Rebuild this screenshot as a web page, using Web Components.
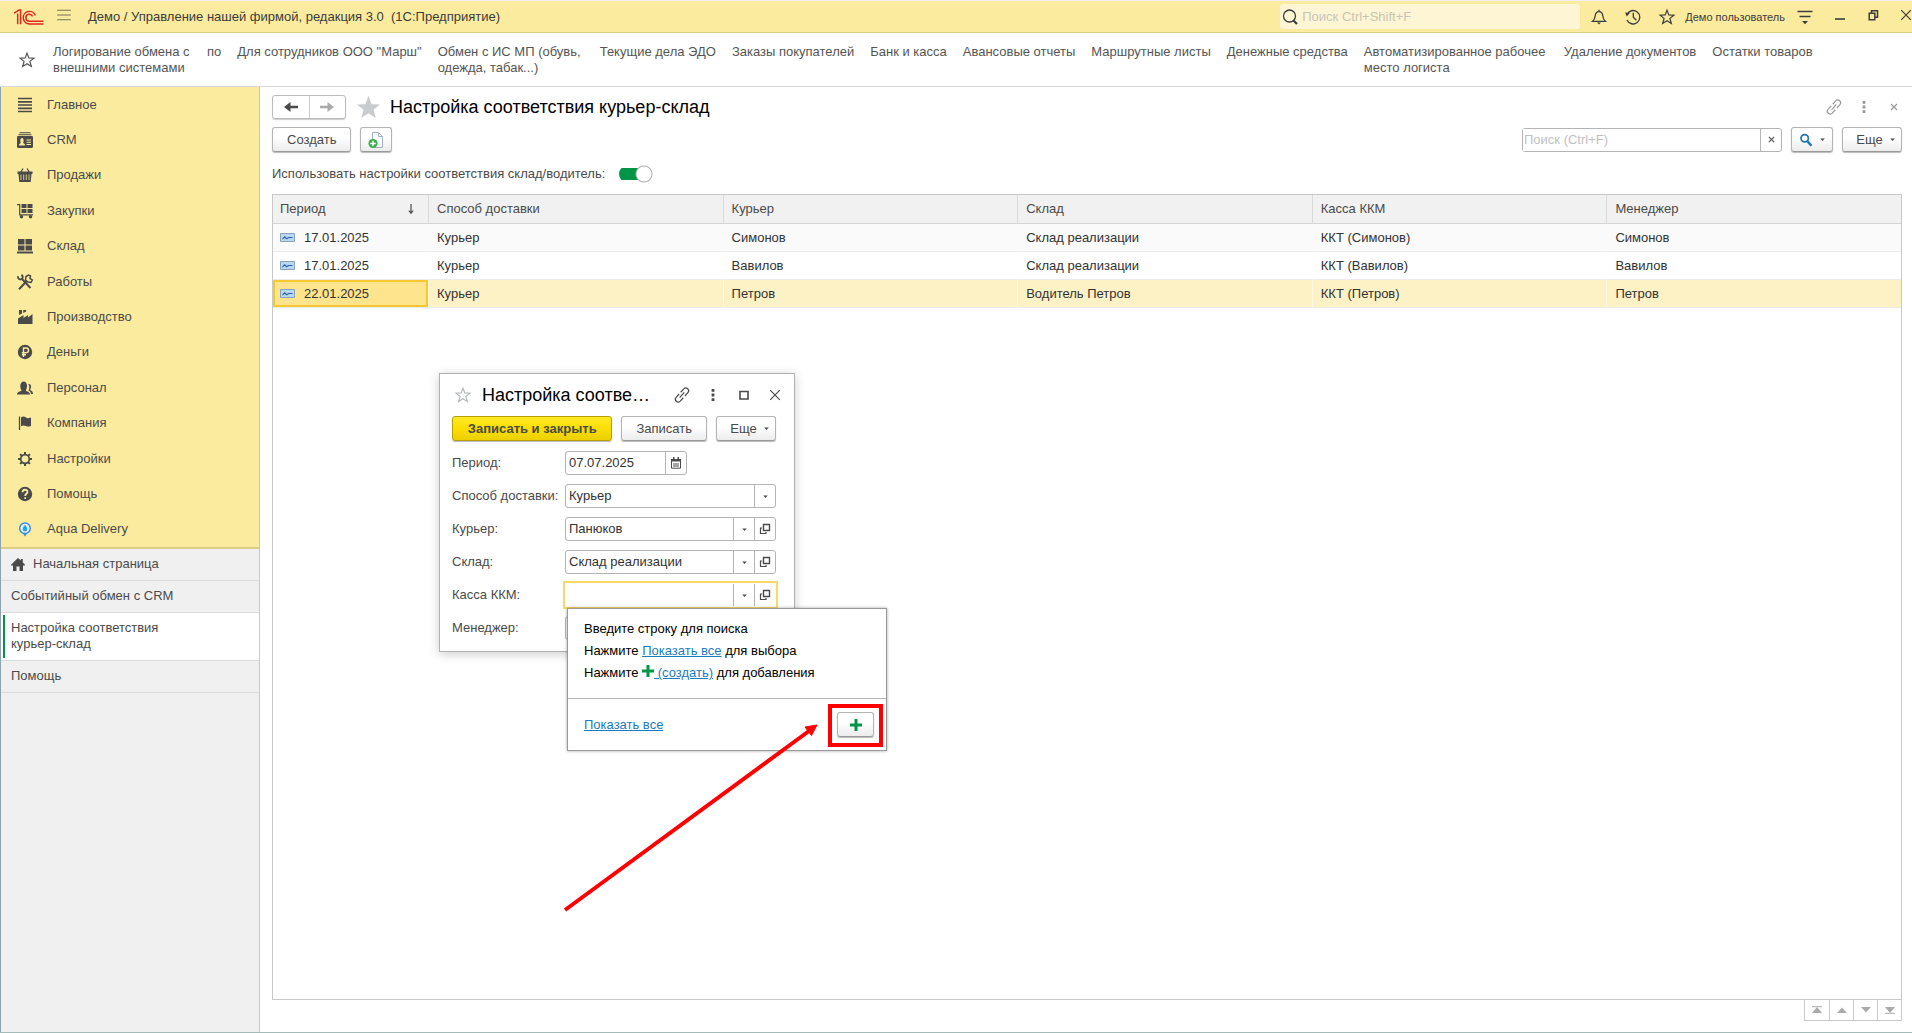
<!DOCTYPE html>
<html lang="ru">
<head>
<meta charset="utf-8">
<title>Управление нашей фирмой</title>
<style>
	:root {
		--brand: #fbeb9e;
		--brand-line: #d8cd84;
		--line: #c8c8c8;
		--text: #4a4a4a;
		--link: #1a7cc0;
		--green: #009646;
	}

	html,
	body {
		height: 100%;
		margin: 0;
	}

	body {
		color: var(--text);
		font-family: "Liberation Sans", Arial, sans-serif;
		font-size: 13px;
		line-height: 16px;
		overflow: hidden;
	}
</style>
</head>
<body>
<app-shell>
	<title-bar slot="title"></title-bar>
	<favorites-bar slot="favorites">
		<a href="#">Логирование обмена с внешними системами</a>
		<a href="#">по</a>
		<a href="#">Для сотрудников ООО "Марш"</a>
		<a href="#">Обмен с ИС МП (обувь, одежда, табак...)</a>
		<a href="#">Текущие дела ЭДО</a>
		<a href="#">Заказы покупателей</a>
		<a href="#">Банк и касса</a>
		<a href="#">Авансовые отчеты</a>
		<a href="#">Маршрутные листы</a>
		<a href="#">Денежные средства</a>
		<a href="#">Автоматизированное рабочее место логиста</a>
		<a href="#">Удаление документов</a>
		<a href="#">Остатки товаров</a>
	</favorites-bar>
	<section-menu slot="side"></section-menu>
	<open-tabs slot="side"></open-tabs>
	<list-form></list-form>
	<form-window slot="windows"></form-window>
	<call-out slot="windows"></call-out>
</app-shell>

<script>
// Icon shapes: [viewBox, markup]
const ICONS = {
	logo: ['0 0 30 16', '<g fill="none" stroke="#e0281f" stroke-width="1.5"><path d="M.8 4.5V3.6L5 1h1.6v14.2M3.7 15.2V4.6"/><path d="M21.4 6.4A6.3 6.3 0 1 0 15.5 15H29.5"/><path d="M18.6 7.4a3.5 3.5 0 1 0-3.2 4.8H29.5"/></g>'],
	burger: ['0 0 16 14', '<path d="M0 1.5h16M0 7h16M0 12.5h16" stroke="currentColor" stroke-width="1.3"/>'],
	search: ['0 0 16 16', '<circle cx="7.5" cy="7" r="6" fill="none" stroke="currentColor" stroke-width="1.3"/><path d="M11.5 11.5l3.5 3.5" stroke="currentColor" stroke-width="2.2"/>'],
	lens: ['0 0 16 16', '<circle cx="6.5" cy="6" r="4.2" fill="#fff" stroke="#1f77b4" stroke-width="2"/><path d="M9.8 9.6l4.4 5" stroke="#1f77b4" stroke-width="2.8"/>'],
	bell: ['0 0 16 16', '<path d="M1.5 12.4h13c-2-1.6-2.4-3-2.7-5.4C11.5 4 10.3 2.7 8 2.7S4.5 4 4.2 7c-.3 2.4-.7 3.8-2.7 5.4zM8 .8v2" fill="none" stroke="currentColor" stroke-width="1.3"/><path d="M6 13.5h4L8 15.6z" fill="currentColor"/>'],
	history: ['0 0 16 16', '<path d="M2 5.5A6.7 6.7 0 1 1 2 11M8.3 3.8V8.3l3 3" fill="none" stroke="currentColor" stroke-width="1.3"/><path d="M0 3.5l4.8.6L1.8 7.6z" fill="currentColor"/>'],
	star: ['0 0 16 16', '<path d="M8 1.1l1.8 4.8 5.1.3-4 3.2 1.4 5.1L8 11.7l-4.3 2.8 1.4-5.1-4-3.2 5.1-.3z" fill="none" stroke="currentColor" stroke-width="1.2"/>'],
	starFull: ['0 0 24 23', '<path d="M12 0l3.3 8.5 8.7.3-6.8 5.5L19.6 23 12 18l-7.6 5 2.4-8.7L0 8.8l8.7-.3z" fill="#c9cbce"/>'],
	userMenu: ['0 0 16 16', '<path d="M.5 2.5h15M2.5 7.5h11" stroke="currentColor" stroke-width="1.3"/><path d="M5 12h6l-3 3.2z" fill="currentColor"/>'],
	minimize: ['0 0 12 12', '<path d="M1 10h10" stroke="currentColor" stroke-width="1.6"/>'],
	restore: ['0 0 12 12', '<path d="M2.2 4.2h5.6v6.6H2.2zM4.5 4V1.7h6v6.6H8" fill="none" stroke="currentColor" stroke-width="1.5"/>'],
	maximize: ['0 0 12 12', '<path d="M2 2.5h8v7.5H2z" fill="none" stroke="currentColor" stroke-width="1.6"/>'],
	close: ['0 0 12 12', '<path d="M1.2 1.2l9.6 9.6M10.8 1.2L1.2 10.8" stroke="currentColor" stroke-width="1.2"/>'],
	cross: ['0 0 8 8', '<path d="M1 1l6 6M7 1L1 7" stroke="currentColor" stroke-width="1.2"/>'],
	link: ['0 0 16 16', '<g transform="rotate(-48 8 8)" fill="none" stroke="currentColor" stroke-width="1.2"><path d="M6.8 5.2H2.3a2.8 2.8 0 0 0 0 5.6h4.5M9.2 5.2h4.5a2.8 2.8 0 0 1 0 5.6H9.2M4.5 8h7"/></g>'],
	dots: ['0 0 4 12', '<path d="M.6 0h2.8v2.8H.6zM.6 4.6h2.8v2.8H.6zM.6 9.2h2.8V12H.6z" fill="currentColor"/>'],
	back: ['0 0 14 10', '<path d="M6.5 0v3.8H14v2.4H6.5V10L0 5z" fill="currentColor"/>'],
	forward: ['0 0 14 10', '<path d="M7.5 0v3.8H0v2.4h7.5V10L14 5z" fill="currentColor"/>'],
	copy: ['0 0 16 18', '<path d="M4.5 1.5h6l4 4v11h-10z" fill="#fafcff" stroke="#9fb0c4"/><path d="M10.5 1.5v4h4" fill="none" stroke="#9fb0c4"/><circle cx="5" cy="12.5" r="4.5" fill="#36ab49"/><path d="M5 9.7v5.6M2.2 12.5h5.6" stroke="#fff" stroke-width="1.4"/>'],
	caret: ['0 0 6 4', '<path d="M0 .5h6L3 4z" fill="currentColor"/>'],
	calendar: ['0 0 12 12', '<path d="M1.5 2.5h9v8.7h-9z" fill="none" stroke="currentColor"/><path d="M1 2h10v2.5H1zM3 0h1.5v3H3zM7.5 0H9v3H7.500z" fill="currentColor"/><path d="M4 6v4M6 6v4M8 6v4" stroke="currentColor"/>'],
	open: ['0 0 12 12', '<path d="M4.5 1.5h6v6h-6z" fill="none" stroke="currentColor" stroke-width="1.4"/><path d="M3.2 5H1.5v5.5H7V9" fill="none" stroke="currentColor" stroke-width="1.2"/>'],
	plus: ['0 0 12 12', '<path d="M4.5 0h3v4.5H12v3H7.5V12h-3V7.5H0v-3h4.5z" fill="#009646"/>'],
	sort: ['0 0 8 12', '<path d="M4 1v9M1.8 7.5L4 10.3l2.2-2.8" fill="none" stroke="currentColor" stroke-width="1.2"/>'],
	record: ['0 0 15 9', '<path d="M.5.5h14v8H.5z" fill="#b9d7ee" stroke="#88a4bb"/><path d="M2.5 6.2l2.2-2.4 2 1.9 2-1.2h3.8" fill="none" stroke="#2b5eb7" stroke-width="1.1"/>'],
	home: ['0 0 14 13', '<path d="M7 0l2.8 2.6V1h2v3.5L14 6.7V7.5h-2V13H8.5V8.5h-3V13H2V7.5H0v-.8z" fill="currentColor"/>'],
	main: ['0 0 16 16', '<path d="M1 1.5h14M1 4.8h14M1 8h14M1 11.3h14M1 14.5h14" stroke="currentColor" stroke-width="1.7"/>'],
	crm: ['0 0 16 16', '<path d="M2.5.7h11M1.5 2.7h13" stroke="currentColor" stroke-width="1.1"/><path d="M0 5.2C0 4.5.5 4 1.2 4h13.6c.7 0 1.2.5 1.2 1.2v9.6c0 .7-.5 1.2-1.2 1.2H1.2C.5 16 0 15.5 0 14.8z" fill="currentColor"/><path d="M2 13.5c0-1.7 1-2 2-2.4C3 9.5 3.2 6 5 6s2 3.5 1 5.1c1 .4 2 .7 2 2.4zM9.5 7.5H14v1H9.5zM9.5 9.7H14v1H9.5zM9.5 12H14v1H9.5z" fill="#fbeb9e"/>'],
	sales: ['0 0 16 16', '<path d="M3.5 5.5L6 1.5M12.5 5.5L10 1.5" stroke="currentColor" stroke-width="1.3"/><path d="M.5 4.5h15v2.5h-1L13.7 15H2.3L1.5 7h-1z" fill="currentColor"/><path d="M4 7.5v5.5M6.7 7.5v5.5M9.3 7.5v5.5M12 7.5v5.5" stroke="#fbeb9e" stroke-width=".8"/>'],
	purchase: ['0 0 16 16', '<path d="M0 1.6h2.7v10.2H16" fill="none" stroke="currentColor" stroke-width="1.2"/><path d="M4.5 1h5v4h-5zM10.5 1h5v4h-5zM4.5 6h5v4h-5zM10.5 6h5v4h-5z" fill="currentColor"/><circle cx="4.5" cy="13.8" r="1.7" fill="currentColor"/><circle cx="13.5" cy="13.8" r="1.7" fill="currentColor"/>'],
	stock: ['0 0 16 16', '<path d="M1 1h6.5v5.5H1zM8.5 1H15v5.5H8.5zM1 7.5h6.5v5H1zM8.5 7.5H15v5H8.5zM0 13.5h16v2H0z" fill="currentColor"/>'],
	works: ['0 0 16 16', '<path d="M.8 2.3c0 2.7 2 3.7 3.7 2.7C6.3 4 6 2 4.5.8M5 5l8.5 9" fill="none" stroke="currentColor" stroke-width="1.9"/><path d="M2 15.3l8-8.5" stroke="currentColor" stroke-width="2"/><path d="M9 2.5l2.5-1.5 2 1-.5 2.5L15.3 6 14 8.5 11 8 8.5 6z" fill="none" stroke="currentColor" stroke-width="1.5"/>'],
	factory: ['0 0 16 16', '<path d="M1 15V9.5L6.5 6v3L11 6v2.5L15.5 5v10zM2 1h3v3.5L2 6zM6.2 1h3v1.5l-3 1.5z" fill="currentColor"/>'],
	money: ['0 0 16 16', '<circle cx="8" cy="8" r="7.2" fill="currentColor"/><path d="M6.5 13V4h2.7a2.3 2.3 0 0 1 0 4.7H4.8M4.8 10.7H9" fill="none" stroke="#fbeb9e" stroke-width="1.4"/>'],
	staff: ['0 0 16 16', '<path d="M0 14.5c0-2.3 1.5-2.8 4.3-3.6v-1C2.5 7 3 1.5 6.7 1.5S10.8 7 9 9.9v1c2.5.8 4 1.3 4 3.6zM11.3 4c3-.6 3.5 3.5 2 5.2v1c1.7.8 2.7 1.5 2.7 3.8h-2c0-1.8-1.2-3-2.5-3.6 1.3-2 1-4.6-.2-6.4z" fill="currentColor"/>'],
	company: ['0 0 16 16', '<path d="M2.5 1.5V15" stroke="currentColor" stroke-width="1.3"/><path d="M4 2.5c2-1.5 3.5-1 5 0s2.5.7 5 0v8.5c-2.5.8-3.7.8-5.2 0s-3-.8-4.8.2z" fill="currentColor"/>'],
	settings: ['0 0 16 16', '<circle cx="8" cy="8" r="4.3" fill="none" stroke="currentColor" stroke-width="1.7"/><path d="M8 1v2.5M8 12.5V15M1 8h2.5M12.5 8H15M3.1 3.1l1.7 1.7M11.2 11.2l1.7 1.7M12.9 3.1l-1.7 1.7M4.8 11.2l-1.7 1.7" stroke="currentColor" stroke-width="2"/>'],
	help: ['0 0 16 16', '<circle cx="8" cy="8" r="7.2" fill="currentColor"/><path d="M5.5 6.2c0-3.2 5-3.2 5-.3 0 1.9-2.3 1.8-2.3 4M8.2 11.2v1.9" fill="none" stroke="#fbeb9e" stroke-width="1.8"/>'],
	aqua: ['0 0 16 16', '<path d="M5.5 12L8 15.5l2.5-3.5z" fill="#3b8fe0"/><circle cx="8" cy="7.3" r="5.3" fill="#e8f3fa" stroke="#3d8edd" stroke-width="1.5"/><path d="M8 3.8c1.400 1.900 2.300 3 2.300 4.300a2.300 2.300 0 0 1-4.600 0C5.700 6.800 6.600 5.700 8 3.800z" fill="#18a6ef"/>'],
	first: ['0 0 10 8', '<path d="M0 .7h10" stroke="currentColor"/><path d="M5 1l5 6H0z" fill="currentColor"/>'],
	up: ['0 0 10 8', '<path d="M5 1.5L10 7H0z" fill="currentColor"/>'],
	down: ['0 0 10 8', '<path d="M5 6.5L10 1H0z" fill="currentColor"/>'],
	last: ['0 0 10 8', '<path d="M0 7.3h10" stroke="currentColor"/><path d="M5 7l5-6H0z" fill="currentColor"/>']
};

// Rules that every component needs
const RESET = `
	* {
		box-sizing: border-box;
	}

	button,
	input,
	select {
		color: inherit;
		font: inherit;
		margin: 0;
	}

	button {
		background: none;
		border: none;
		cursor: pointer;
		padding: 0;
	}

	button app-icon {
		vertical-align: top;
	}

	a {
		color: inherit;
		text-decoration: none;
	}
`;

class BaseElement extends HTMLElement {
	#hasConnected = false;

	connectedCallback() {
		// Fill the Shadow DOM only once
		if (this.#hasConnected) return;
		this.#hasConnected = true;
		this.attachShadow({ mode: 'open' });
		this.shadowRoot.innerHTML = `<style>${RESET}${this.styles()}</style>${this.render()}`;
	}

	styles() {
		return '';
	}

	render() {
		return '<slot></slot>';
	}
}

// <app-icon name="star" size="16"> : size is the width, the height follows the shape
class AppIcon extends BaseElement {
	styles() {
		return `
			:host {
				display: inline-flex;
				flex: none;
			}

			svg {
				display: block;
				overflow: visible;
			}
		`;
	}

	render() {
		let [viewBox, shape] = ICONS[this.getAttribute('name')];
		let [, , w, h] = viewBox.split(' ').map(Number);
		let width = Number(this.getAttribute('size')) || w;
		return `<svg viewBox="${viewBox}" width="${width}" height="${Math.round(width * h / w)}" aria-hidden="true">${shape}</svg>`;
	}
}

class AppShell extends BaseElement {
	styles() {
		return `
			:host {
				background: #fff;
				border-bottom: 1px solid #a3bab9;
				border-top: 1px solid #f0f0f0;
				box-sizing: border-box;
				display: flex;
				flex-direction: column;
				height: 100vh;
				position: relative;
			}

			.body {
				display: flex;
				flex: 1;
				min-height: 0;
			}

			aside {
				background: #f0f0f0;
				border-left: 1px solid #8da3b0;
				border-right: 1px solid #d3cd92;
				flex: none;
				width: 260px;
			}

			main {
				display: flex;
				flex: 1;
				min-width: 0;
			}
		`;
	}

	render() {
		return `
			<slot name="title"></slot>
			<slot name="favorites"></slot>
			<div class="body">
				<aside><slot name="side"></slot></aside>
				<main><slot></slot></main>
			</div>
			<slot name="windows"></slot>
		`;
	}
}

class TitleBar extends BaseElement {
	styles() {
		return `
			:host {
				align-items: center;
				background: var(--brand);
				border-bottom: 1px solid var(--brand-line);
				color: #3c3c3c;
				display: flex;
				height: 31px;
				padding-left: 14px;
			}

			.menu {
				color: #777154;
				margin: 0 17px 0 13px;
			}

			h1 {
				flex: 1;
				font-size: 13px;
				font-weight: normal;
				margin: 0;
				white-space: pre;
			}

			label {
				align-items: center;
				background: #fdf5d4;
				border-radius: 3px;
				display: flex;
				gap: 4px;
				height: 25px;
				margin-right: 11px;
				padding-left: 2px;
				width: 300px;
			}

			input {
				background: none;
				border: none;
				flex: 1;
				min-width: 0;
				outline: none;
				padding: 0;
			}

			input::placeholder {
				color: #c8c5b4;
				opacity: 1;
			}

			.tools {
				align-items: center;
				display: flex;
				gap: 18px;
			}

			.user {
				font-size: 11px;
				margin: 0 12px 0 10px;
			}

			.window {
				display: flex;
				gap: 21px;
				margin-left: 21px;
			}
		`;
	}

	render() {
		return `
			<app-icon name="logo" size="30"></app-icon>
			<button class="menu" aria-label="Меню"><app-icon name="burger" size="14"></app-icon></button>
			<h1>Демо / Управление нашей фирмой, редакция 3.0  (1С:Предприятие)</h1>
			<label>
				<app-icon name="search"></app-icon>
				<input type="text" aria-label="Поиск" placeholder="Поиск Ctrl+Shift+F">
			</label>
			<div class="tools">
				<button aria-label="Оповещения"><app-icon name="bell"></app-icon></button>
				<button aria-label="История"><app-icon name="history"></app-icon></button>
				<button aria-label="Избранное"><app-icon name="star"></app-icon></button>
			</div>
			<button class="user">Демо пользователь</button>
			<button aria-label="Сервис"><app-icon name="userMenu"></app-icon></button>
			<div class="window">
				<button aria-label="Свернуть"><app-icon name="minimize"></app-icon></button>
				<button aria-label="Восстановить"><app-icon name="restore"></app-icon></button>
				<button aria-label="Закрыть"><app-icon name="close"></app-icon></button>
			</div>
		`;
	}
}

class FavoritesBar extends BaseElement {
	styles() {
		return `
			:host {
				align-items: center;
				border-bottom: 1px solid #d6d8d6;
				box-sizing: border-box;
				color: #555;
				display: flex;
				gap: 18px;
				min-height: 54px;
				padding-left: 19px;
			}

			nav {
				align-items: flex-start;
				display: flex;
				gap: 16px;
			}

			::slotted(a) {
				color: inherit;
				max-width: 184px;
				text-decoration: none;
			}

			::slotted(a:nth-child(1)) {
				max-width: 138px;
			}

			::slotted(a:nth-child(3)) {
				max-width: none;
			}

			::slotted(a:nth-child(4)) {
				max-width: 146px;
			}
		`;
	}

	render() {
		return `
			<app-icon name="star"></app-icon>
			<nav><slot></slot></nav>
		`;
	}
}

class SectionMenu extends BaseElement {
	#items = [
		['main', 'Главное'],
		['crm', 'CRM'],
		['sales', 'Продажи'],
		['purchase', 'Закупки'],
		['stock', 'Склад'],
		['works', 'Работы'],
		['factory', 'Производство'],
		['money', 'Деньги'],
		['staff', 'Персонал'],
		['company', 'Компания'],
		['settings', 'Настройки'],
		['help', 'Помощь'],
		['aqua', 'Aqua Delivery']
	];

	styles() {
		return `
			:host {
				background: var(--brand);
				border-bottom: 2px solid #dccf85;
				display: block;
			}

			nav {
				display: grid;
				grid-auto-rows: 1fr;
				height: 460px;
			}

			a {
				align-items: center;
				display: flex;
				gap: 14px;
				padding-left: 16px;
			}
		`;
	}

	render() {
		let links = this.#items.map(([icon, text]) => `<a href="#"><app-icon name="${icon}"></app-icon>${text}</a>`);
		return `<nav>${links.join('')}</nav>`;
	}
}

class OpenTabs extends BaseElement {
	styles() {
		return `
			:host {
				display: block;
			}

			nav {
				display: flex;
				flex-direction: column;
			}

			a {
				border-bottom: 1px solid #dcdcdc;
				display: flex;
				gap: 8px;
				padding: 7px 80px 8px 10px;
			}

			a:first-child {
				align-items: center;
			}

			/* Green stripe of the current page */
			.current {
				background: linear-gradient(var(--green), var(--green)) 2px 50% / 2px 43px no-repeat #fff;
			}
		`;
	}

	render() {
		return `
			<nav>
				<a href="#"><app-icon name="home"></app-icon>Начальная страница</a>
				<a href="#">Событийный обмен с CRM</a>
				<a href="#" class="current" aria-current="page">Настройка соответствия курьер-склад</a>
				<a href="#">Помощь</a>
			</nav>
		`;
	}
}

// Raised button; kind="primary" is the yellow one, menu adds the caret
class UiButton extends BaseElement {
	styles() {
		return `
			:host {
				display: inline-flex;
			}

			button {
				align-items: center;
				background: linear-gradient(#fff 40%, #ececec);
				border: 1px solid #b4b4b4;
				border-bottom-color: #999;
				border-radius: 3px;
				box-shadow: 0 1px 1px #bbb;
				display: flex;
				gap: 7px;
				height: 25px;
				justify-content: center;
				padding: 0 var(--pad, 14px);
				white-space: nowrap;
				width: 100%;
			}

			:host([kind="primary"]) button {
				background: linear-gradient(#ffe928, #fade00 50%, #ecd000);
				border-color: #b5a000;
				font-weight: bold;
			}
		`;
	}

	render() {
		let label = this.getAttribute('label');
		let aria = label ? `aria-label="${label}"` : '';
		let caret = this.hasAttribute('menu') ? '<app-icon name="caret" size="5"></app-icon>' : '';
		return `<button ${aria}><slot></slot>${caret}</button>`;
	}
}

class ToggleSwitch extends BaseElement {
	styles() {
		return `
			:host {
				display: block;
			}

			label {
				align-items: center;
				display: flex;
				gap: 14px;
			}

			input {
				appearance: none;
				background: radial-gradient(circle at 25px 9px, #fff 7px, #aaa 8px, #aaa 8px, transparent 9px),
					linear-gradient(var(--green), var(--green)) 0 3px / 30px 12px no-repeat;
				border-radius: 9px;
				height: 18px;
				width: 34px;
			}
		`;
	}

	render() {
		return `
			<label>
				<slot></slot>
				<input type="checkbox" role="switch" checked>
			</label>
		`;
	}
}

class ListForm extends BaseElement {
	styles() {
		return `
			:host {
				display: flex;
				flex: 1;
				flex-direction: column;
				min-width: 0;
				padding: 8px 10px 11px 12px;
			}

			header,
			.commands {
				align-items: center;
				display: flex;
			}

			.history {
				border: 1px solid #bbb;
				border-radius: 3px;
				box-shadow: 0 1px 1px #ccc;
				display: flex;
				height: 24px;
				margin-right: 11px;
				width: 74px;
			}

			.history button {
				align-items: center;
				display: flex;
				flex: 1;
				justify-content: center;
			}

			.history button + button {
				border-left: 1px solid #ccc;
				color: #aaa;
			}

			h2 {
				color: #000;
				flex: 1;
				font-size: 18px;
				font-weight: normal;
				line-height: 24px;
				margin: 0 0 0 10px;
			}

			.tools {
				color: #999;
				display: flex;
				gap: 14px;
			}

			.tools button {
				display: grid;
				height: 16px;
				place-content: center;
				width: 16px;
			}

			.commands {
				gap: 9px;
				margin-top: 8px;
			}

			.search {
				border: 1px solid #b4b4b4;
				border-radius: 3px;
				display: flex;
				height: 24px;
				margin-left: auto;
				width: 260px;
			}

			.search input {
				border: none;
				flex: 1;
				min-width: 0;
				outline: none;
				padding: 0 1px;
			}

			.search input::placeholder {
				color: #bfbfbf;
				opacity: 1;
			}

			.search button {
				border-left: 1px solid #b4b4b4;
				display: grid;
				place-content: center;
				width: 21px;
			}

			.doc {
				--pad: 7px;
			}

			.find {
				--pad: 6px;
				width: 42px;
			}

			.more {
				--pad: 7px 0 14px;
				width: 60px;
			}

			toggle-switch {
				margin: 13px 0 11px;
			}

			data-list {
				flex: 1;
			}

			footer {
				align-self: flex-end;
				border: 1px solid var(--line);
				border-top: none;
				color: #aaa;
				display: flex;
			}

			footer button {
				display: grid;
				height: 20px;
				place-content: center;
				width: 24px;
			}

			footer button + button {
				border-left: 1px solid var(--line);
			}
		`;
	}

	render() {
		return `
			<header>
				<div class="history">
					<button aria-label="Назад"><app-icon name="back"></app-icon></button>
					<button aria-label="Вперед"><app-icon name="forward"></app-icon></button>
				</div>
				<button aria-label="В избранное"><app-icon name="starFull" size="23"></app-icon></button>
				<h2>Настройка соответствия курьер-склад</h2>
				<div class="tools">
					<button aria-label="Ссылка"><app-icon name="link"></app-icon></button>
					<button aria-label="Еще действия"><app-icon name="dots"></app-icon></button>
					<button aria-label="Закрыть"><app-icon name="cross"></app-icon></button>
				</div>
			</header>
			<div class="commands">
				<ui-button>Создать</ui-button>
				<ui-button class="doc" label="Создать копированием"><app-icon name="copy"></app-icon></ui-button>
				<div class="search">
					<input type="text" aria-label="Поиск в списке" placeholder="Поиск (Ctrl+F)">
					<button aria-label="Очистить"><app-icon name="cross" size="7"></app-icon></button>
				</div>
				<ui-button class="find" label="Найти" menu><app-icon name="lens" size="14"></app-icon></ui-button>
				<ui-button class="more" menu>Еще</ui-button>
			</div>
			<toggle-switch>Использовать настройки соответствия склад/водитель:</toggle-switch>
			<data-list></data-list>
			<footer>
				<button aria-label="В начало"><app-icon name="first"></app-icon></button>
				<button aria-label="Выше"><app-icon name="up"></app-icon></button>
				<button aria-label="Ниже"><app-icon name="down"></app-icon></button>
				<button aria-label="В конец"><app-icon name="last"></app-icon></button>
			</footer>
		`;
	}
}

class DataList extends BaseElement {
	#rows = [
		['17.01.2025', 'Курьер', 'Симонов', 'Склад реализации', 'ККТ (Симонов)', 'Симонов'],
		['17.01.2025', 'Курьер', 'Вавилов', 'Склад реализации', 'ККТ (Вавилов)', 'Вавилов'],
		['22.01.2025', 'Курьер', 'Петров', 'Водитель Петров', 'ККТ (Петров)', 'Петров']
	];

	styles() {
		return `
			:host {
				border: 1px solid var(--line);
				display: block;
			}

			table {
				border-collapse: separate;
				border-spacing: 0;
				table-layout: fixed;
				width: 100%;
			}

			th,
			td {
				border-bottom: 1px solid #ececec;
				height: 28px;
				padding: 0 8px;
				text-align: left;
			}

			th {
				background: #f1f1f1;
				border-bottom-color: #d4d4d4;
				font-weight: normal;
				height: 29px;
			}

			th:first-child {
				width: 155px;
			}

			th:first-child,
			td:first-child {
				padding-left: 7px;
			}

			th + th {
				border-left: 1px solid #d9d9d9;
			}

			td {
				color: #333;
			}

			td + td {
				border-left: 1px solid transparent;
			}

			tr:nth-child(odd) td {
				background: #fafafa;
			}

			tr.selected td {
				background: #fdf1c6;
			}

			tr.selected td + td {
				border-left-color: #fef8e2;
			}

			tr.selected td:first-child {
				background: #fee48c;
				box-shadow: inset 0 0 0 2px #f7c82f;
			}

			.cell {
				align-items: center;
				display: flex;
				gap: 9px;
			}

			.sorted {
				justify-content: space-between;
				padding-right: 5px;
			}
		`;
	}

	render() {
		let rows = this.#rows.map(([period, ...rest], i) => `
			<tr ${i === 2 ? 'class="selected"' : ''}>
				<td><div class="cell"><app-icon name="record"></app-icon>${period}</div></td>
				${rest.map((text) => `<td>${text}</td>`).join('')}
			</tr>
		`);
		return `
			<table>
				<thead>
					<tr>
						<th><div class="cell sorted">Период<app-icon name="sort"></app-icon></div></th>
						<th>Способ доставки</th>
						<th>Курьер</th>
						<th>Склад</th>
						<th>Касса ККМ</th>
						<th>Менеджер</th>
					</tr>
				</thead>
				<tbody>${rows.join('')}</tbody>
			</table>
		`;
	}
}

// One labelled line of a form.
// type: date, select or text; "open" adds the button that opens the chosen item
class FormField extends BaseElement {
	styles() {
		return `
			:host {
				align-items: center;
				display: grid;
				grid-template-columns: 113px minmax(0, 1fr);
				position: relative;
			}

			:host([focused]) {
				z-index: 1;
			}

			.box {
				background: #fff;
				border: 1px solid #b4b4b4;
				border-radius: 3px;
				color: #333;
				display: flex;
				height: 24px;
			}

			:host([type="date"]) .box {
				width: 122px;
			}

			:host([focused]) .box {
				border-color: transparent;
				border-radius: 0;
				outline: 2px solid #fbd965;
			}

			label {
				white-space: nowrap;
			}

			input,
			select {
				appearance: none;
				background: none;
				border: none;
				flex: 1;
				min-width: 0;
				outline: none;
				padding: 0 3px;
			}

			button {
				border-left: 1px solid #b4b4b4;
				color: #4a4a4a;
				display: grid;
				place-content: center;
				width: 21px;
			}

			::slotted(*) {
				left: 115px;
				position: absolute;
				top: 25px;
			}
		`;
	}

	render() {
		let type = this.getAttribute('type');
		let value = this.getAttribute('value') || '';
		let control = type === 'select'
			? `<select id="control"><option>${value}</option></select>`
			: `<input id="control" type="text" value="${value}">`;
		let choose = type === 'date'
			? '<button aria-label="Календарь"><app-icon name="calendar"></app-icon></button>'
			: '<button aria-label="Выбрать"><app-icon name="caret" size="5"></app-icon></button>';
		let open = this.hasAttribute('open')
			? '<button aria-label="Открыть"><app-icon name="open"></app-icon></button>'
			: '';
		return `
			<label for="control">${this.getAttribute('label')}:</label>
			<div class="box">${control}${choose}${open}</div>
			<slot></slot>
		`;
	}
}

class FormWindow extends BaseElement {
	styles() {
		return `
			:host {
				background: #fff;
				border: 1px solid #b0b0b0;
				box-shadow: 0 2px 10px rgba(0, 0, 0, .2);
				box-sizing: border-box;
				left: 439px;
				padding: 9px 18px 11px 12px;
				position: absolute;
				top: 372px;
				width: 356px;
				z-index: 1;
			}

			header {
				align-items: center;
				display: flex;
				gap: 11px;
				padding-left: 3px;
			}

			.star {
				color: #b5b9bd;
			}

			h2 {
				color: #000;
				flex: 1;
				font-size: 18px;
				font-weight: normal;
				line-height: 24px;
				margin: 0;
				white-space: nowrap;
			}

			.tools {
				display: flex;
				gap: 15px;
				margin-right: -7px;
			}

			.tools button {
				display: grid;
				height: 16px;
				place-content: center;
				width: 16px;
			}

			.commands {
				display: flex;
				gap: 9px;
				margin: 9px 0 10px;
			}

			.save {
				flex: 1;
			}

			.more {
				--pad: 7px 0 14px;
				width: 60px;
			}

			.fields {
				display: grid;
				gap: 9px;
			}
		`;
	}

	render() {
		return `
			<header>
				<button class="star" aria-label="В избранное"><app-icon name="star"></app-icon></button>
				<h2>Настройка соотве…</h2>
				<div class="tools">
					<button aria-label="Ссылка"><app-icon name="link"></app-icon></button>
					<button aria-label="Еще действия"><app-icon name="dots"></app-icon></button>
					<button aria-label="Развернуть"><app-icon name="maximize"></app-icon></button>
					<button aria-label="Закрыть"><app-icon name="close"></app-icon></button>
				</div>
			</header>
			<div class="commands">
				<ui-button class="save" kind="primary">Записать и закрыть</ui-button>
				<ui-button>Записать</ui-button>
				<ui-button class="more" menu>Еще</ui-button>
			</div>
			<div class="fields">
				<form-field label="Период" type="date" value="07.07.2025"></form-field>
				<form-field label="Способ доставки" type="select" value="Курьер"></form-field>
				<form-field label="Курьер" type="select" value="Панюков" open></form-field>
				<form-field label="Склад" type="select" value="Склад реализации" open></form-field>
				<form-field label="Касса ККМ" type="text" open focused><choice-popup></choice-popup></form-field>
				<form-field label="Менеджер" type="select" open></form-field>
			</div>
		`;
	}
}

class ChoicePopup extends BaseElement {
	styles() {
		return `
			:host {
				background: #fff;
				border: 1px solid #999;
				box-shadow: 0 0 3px rgba(0, 0, 0, .35);
				box-sizing: border-box;
				color: #000;
				width: 320px;
			}

			p {
				line-height: 22px;
				margin: 0;
			}

			a {
				color: var(--link);
				text-decoration: underline;
			}

			.hint {
				padding: 9px 16px 14px;
			}

			footer {
				align-items: center;
				border-top: 1px solid #b8b8b8;
				display: flex;
				height: 52px;
				justify-content: space-between;
				padding: 0 12px 0 16px;
			}

			ui-button {
				--pad: 0;
				width: 37px;
			}
		`;
	}

	render() {
		return `
			<div class="hint">
				<p>Введите строку для поиска</p>
				<p>Нажмите <a href="#">Показать все</a> для выбора</p>
				<p>Нажмите <app-icon name="plus"></app-icon><a href="#"> (создать)</a> для добавления</p>
			</div>
			<footer>
				<a href="#">Показать все</a>
				<ui-button label="Создать"><app-icon name="plus"></app-icon></ui-button>
			</footer>
		`;
	}
}

// Red frame and arrow drawn over the windows
class CallOut extends BaseElement {
	styles() {
		return `
			:host {
				left: 560px;
				pointer-events: none;
				position: absolute;
				top: 699px;
				z-index: 2;
			}

			svg {
				display: block;
			}
		`;
	}

	render() {
		return `
			<svg width="330" height="220" fill="none" stroke="#f00" stroke-width="4" aria-hidden="true">
				<path d="M270 6h51v39h-51z"/>
				<path d="M5 210L249 31"/>
				<path d="M257 25l-5.5 10.5-6.5-8.5z" fill="#f00" stroke-width="1"/>
			</svg>
		`;
	}
}

customElements.define('app-icon', AppIcon);
customElements.define('ui-button', UiButton);
customElements.define('toggle-switch', ToggleSwitch);
customElements.define('data-list', DataList);
customElements.define('form-field', FormField);
customElements.define('choice-popup', ChoicePopup);
customElements.define('title-bar', TitleBar);
customElements.define('favorites-bar', FavoritesBar);
customElements.define('section-menu', SectionMenu);
customElements.define('open-tabs', OpenTabs);
customElements.define('list-form', ListForm);
customElements.define('form-window', FormWindow);
customElements.define('call-out', CallOut);
customElements.define('app-shell', AppShell);
</script>
</body>
</html>
